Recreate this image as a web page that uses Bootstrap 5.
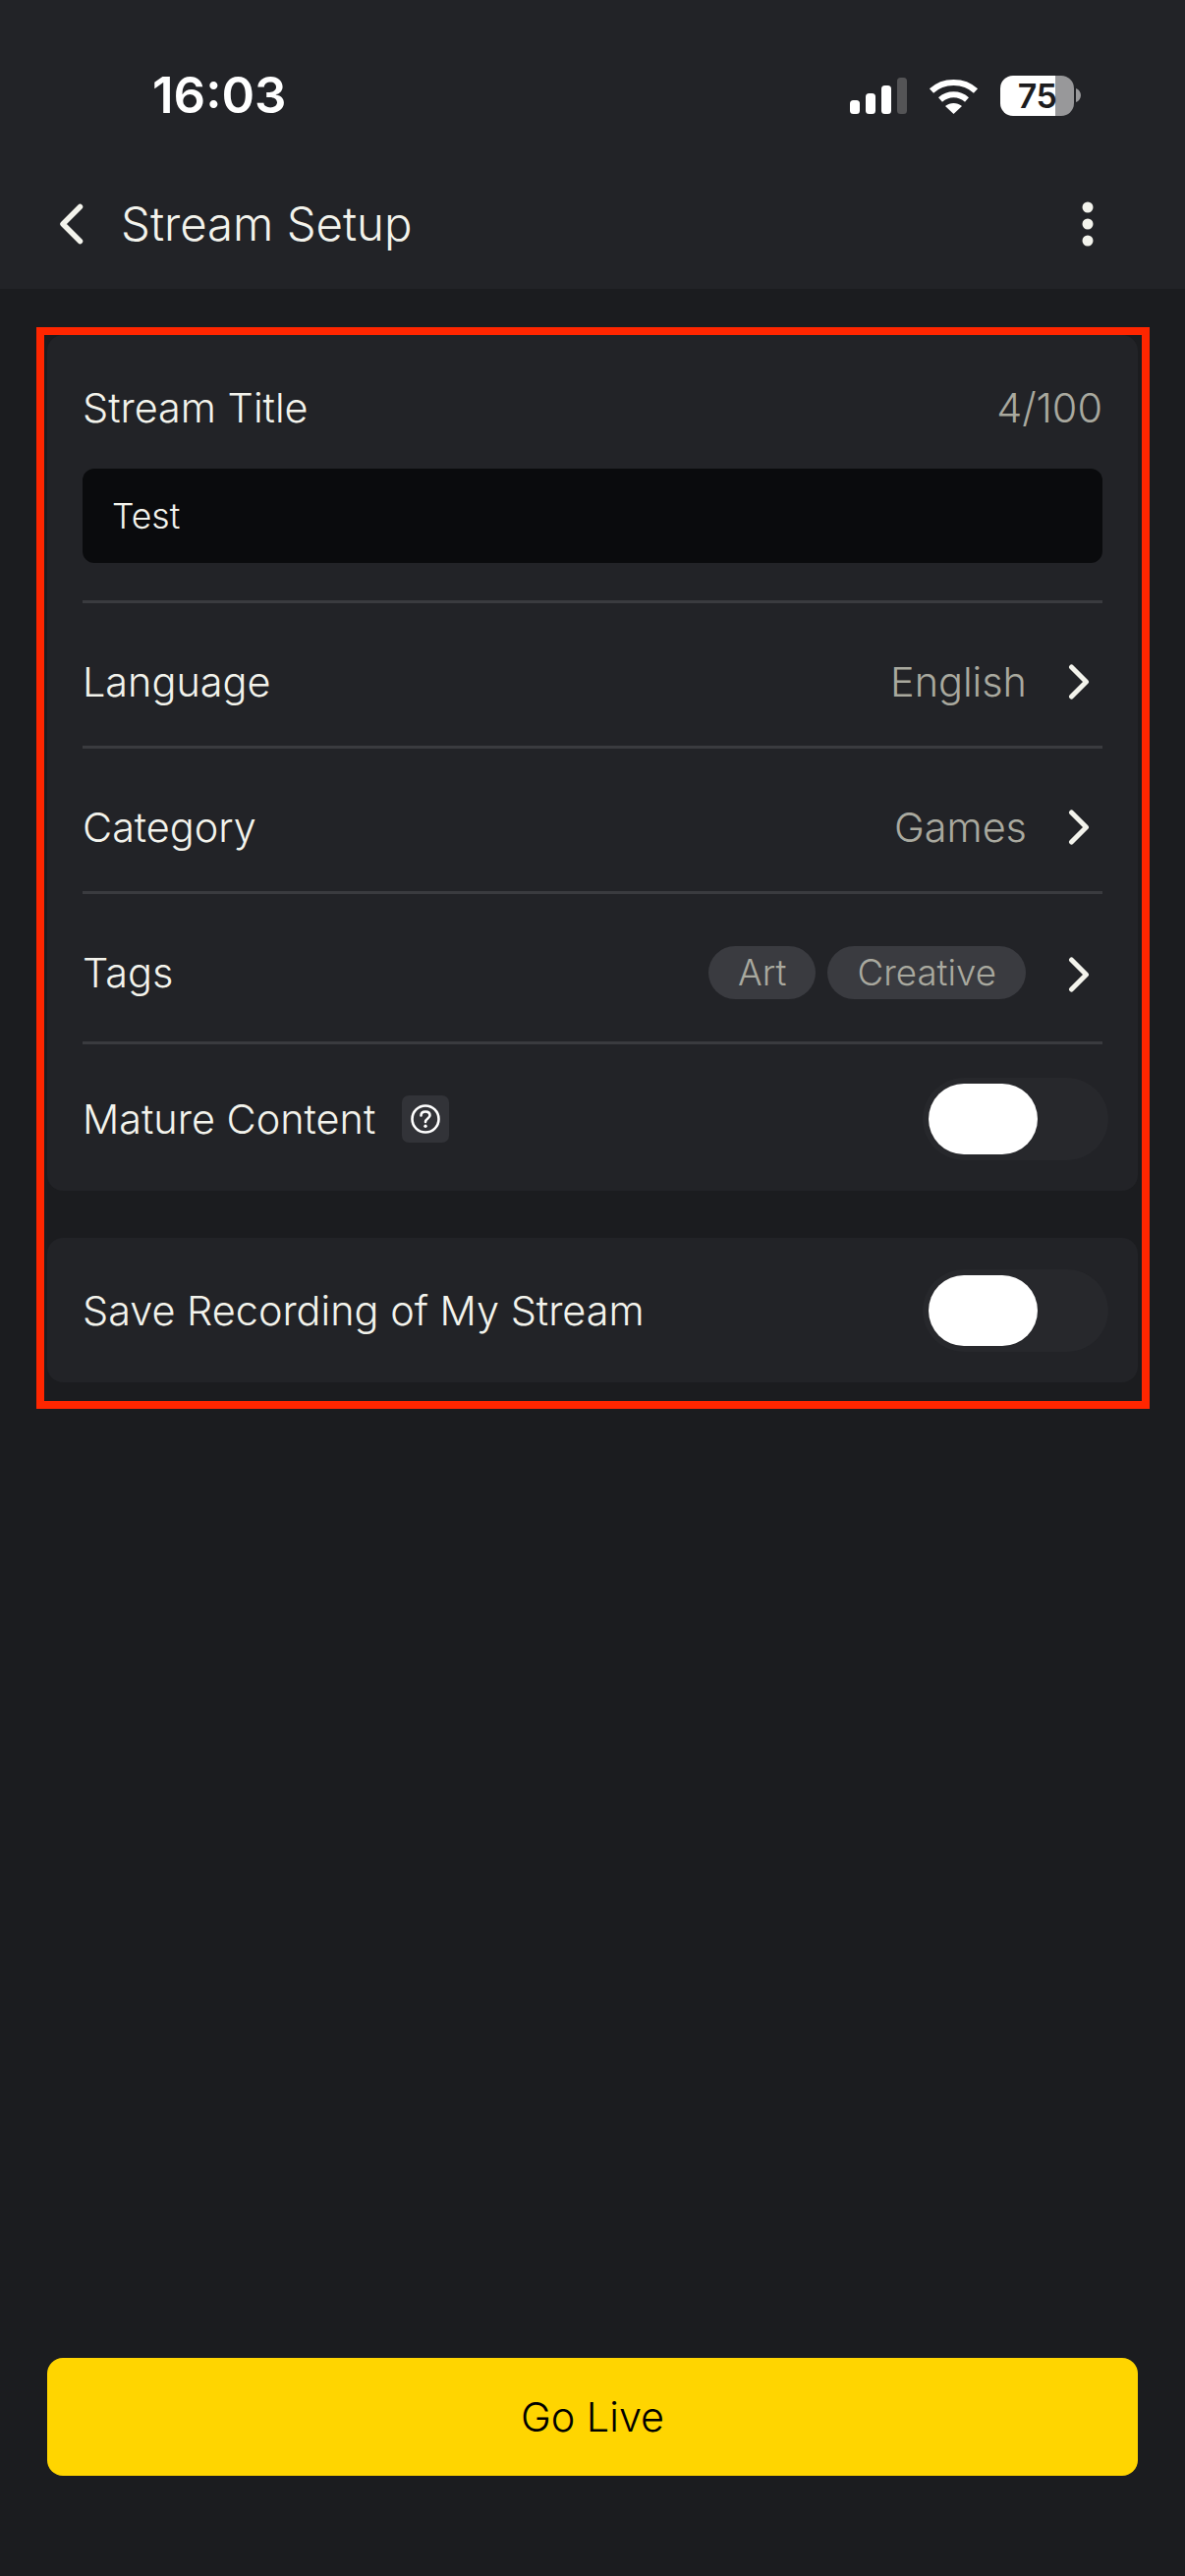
<!DOCTYPE html>
<html lang="en">
<head>
    <meta charset="UTF-8">
    <title>Stream Setup</title>
    <link rel="stylesheet" href="https://cdn.jsdelivr.net/npm/bootstrap@5.3.3/dist/css/bootstrap.min.css">
    <style>
        html, body { height: 100%; }
        body { background: #1b1c1f; color: #f3f3ec; font-family: Inter, "Liberation Sans", sans-serif; font-size: 41.4px; font-weight: 300; line-height: 48px; }
        .page-wrap { min-height: 2622px; }
        .top-head { background: #222327; height: 294px; }
        .status-row { height: 194px; padding: 0 106px 0 155px; }
        .clock { font-size: 51px; font-weight: 600; color: #fff; line-height: 60px; }
        .status-icons { gap: 22px; }
        .batt { width: 75px; height: 41px; border-radius: 13px; background: linear-gradient(90deg, #fff 56px, #98989a 56px); color: #1c1c1e; font-size: 34px; font-weight: 600; line-height: 41px; text-align: center; letter-spacing: -0.5px; }
        .batt-wrap { gap: 2px; }
        .title-row { height: 68px; padding: 0 85px 0 60px; }
        .page-title { font-size: 47.3px; margin-left: 38px; }
        .red-frame { margin: 39px 36px 0 37px; border: 8px solid #ff2600; padding: 0 4px 19px 3px; }
        .setup-box { background: #222327; border-radius: 16px; padding: 0 36px; }
        .setup-box + .setup-box { margin-top: 48px; }
        .field-head { padding-top: 50px; height: 136px; }
        .muted-txt { color: #a9a99f; }
        .form-control.title-input { background: #0a0b0d; border: 0; border-radius: 12px; height: 96px; color: #f3f3ec; font-size: 35.5px; font-weight: 300; padding: 0 30px; }
        .field-end { height: 38px; }
        .set-row { border-top: 3px solid #3a3b3f; padding-top: 15px; height: 148px; }
        .set-row.tags-row { height: 153px; padding-top: 10px; }
        .set-row.last-row { height: 152px; padding-top: 3px; }
        .chev { margin: 0 13px 0 42px; }
        .tag-gap { gap: 12px; }
        .tags-row .chev { margin-left: 31px; margin-top: 3px; }
        .tag-pill { background: #3a3b40; color: #a9a99f; font-size: 36.7px; font-weight: 300; height: 54px; line-height: 54px; padding: 0 30px; }
        .help-box { width: 48px; height: 48px; background: #323338; border-radius: 7px; margin-left: 27px; }
        .toggle-track { width: 189px; height: 84px; background: #27282c; border-radius: 42px; padding: 6px; margin-right: -6px; }
        .toggle-knob { width: 111px; height: 72px; background: #fff; border-radius: 36px; }
        .rec-row { height: 147px; }
        .go-wrap { padding: 0 48px 102px; }
        .btn.go-btn { background: #ffd500; color: #000; border: 0; border-radius: 16px; height: 120px; font-size: 41.4px; font-weight: 300; }
    </style>
</head>
<body>
    <div class="page-wrap d-flex flex-column">
        <div class="top-head">
            <div class="status-row d-flex justify-content-between align-items-center">
                <span class="clock">16:03</span>
                <div class="status-icons d-flex align-items-center">
                    <svg width="58" height="37" viewBox="0 0 58 37">
                        <rect x="0" y="23" width="10" height="14" rx="3.5" fill="#fff"/>
                        <rect x="16" y="16" width="10" height="21" rx="3.5" fill="#fff"/>
                        <rect x="32" y="8" width="10" height="29" rx="3.5" fill="#fff"/>
                        <rect x="48" y="0" width="10" height="37" rx="3.5" fill="#545456"/>
                    </svg>
                    <svg width="51" height="37" viewBox="0 0 51 37">
                        <path d="M3 13.5C15 2 36 2 48 13.5" fill="none" stroke="#fff" stroke-width="6"/>
                        <path d="M12 22.5C20 15.5 31 15.5 39 22.5" fill="none" stroke="#fff" stroke-width="6"/>
                        <path d="M25.500 37L17 29C22 25 29 25 34 29Z" fill="#fff"/>
                    </svg>
                    <div class="batt-wrap d-flex align-items-center">
                        <div class="batt">75</div>
                        <svg width="5" height="14" viewBox="0 0 5 14"><path d="M0 0C3 1 5 4 5 7C5 10 3 13 0 14Z" fill="#98989a"/></svg>
                    </div>
                </div>
            </div>
            <div class="title-row d-flex justify-content-between align-items-center">
                <div class="d-flex align-items-center">
                    <svg width="25" height="42" viewBox="0 0 25 42"><path d="M21.500 3.500L4 21L21.500 38.500" fill="none" stroke="#f3f3ec" stroke-width="5.500" stroke-linecap="round" stroke-linejoin="round"/></svg>
                    <span class="page-title">Stream Setup</span>
                </div>
                <svg width="12" height="46" viewBox="0 0 12 46" class="me-2">
                    <circle cx="6" cy="6" r="5.500" fill="#f3f3ec"/>
                    <circle cx="6" cy="23" r="5.500" fill="#f3f3ec"/>
                    <circle cx="6" cy="40" r="5.500" fill="#f3f3ec"/>
                </svg>
            </div>
        </div>

        <div class="red-frame">
            <div class="setup-box">
                <div class="field-head d-flex justify-content-between">
                    <span>Stream Title</span>
                    <span class="muted-txt">4/100</span>
                </div>
                <input type="text" class="form-control title-input" value="Test">
                <div class="field-end"></div>

                <div class="set-row d-flex justify-content-between align-items-center">
                    <span>Language</span>
                    <div class="d-flex align-items-center">
                        <span class="muted-txt">English</span>
                        <svg class="chev" width="22" height="36" viewBox="0 0 22 36"><path d="M3.500 3L18.500 18L3.500 33" fill="none" stroke="#f3f3ec" stroke-width="5" stroke-linecap="round" stroke-linejoin="round"/></svg>
                    </div>
                </div>
                <div class="set-row d-flex justify-content-between align-items-center">
                    <span>Category</span>
                    <div class="d-flex align-items-center">
                        <span class="muted-txt">Games</span>
                        <svg class="chev" width="22" height="36" viewBox="0 0 22 36"><path d="M3.500 3L18.500 18L3.500 33" fill="none" stroke="#f3f3ec" stroke-width="5" stroke-linecap="round" stroke-linejoin="round"/></svg>
                    </div>
                </div>
                <div class="set-row tags-row d-flex justify-content-between align-items-center">
                    <span>Tags</span>
                    <div class="d-flex align-items-center tag-gap">
                        <span class="badge rounded-pill tag-pill">Art</span>
                        <span class="badge rounded-pill tag-pill">Creative</span>
                        <svg class="chev" width="22" height="36" viewBox="0 0 22 36"><path d="M3.500 3L18.500 18L3.500 33" fill="none" stroke="#f3f3ec" stroke-width="5" stroke-linecap="round" stroke-linejoin="round"/></svg>
                    </div>
                </div>
                <div class="set-row last-row d-flex justify-content-between align-items-center">
                    <div class="d-flex align-items-center">
                        <span>Mature Content</span>
                        <div class="help-box d-flex align-items-center justify-content-center">
                            <svg width="30" height="30" viewBox="0 0 30 30">
                                <circle cx="15" cy="15" r="13.500" fill="none" stroke="#fff" stroke-width="2.600"/>
                                <path d="M10.500 11.500C10.500 8.800 12.500 7.500 15 7.500C17.600 7.500 19.500 9 19.500 11.300C19.500 14.500 15 14.500 15 18" fill="none" stroke="#fff" stroke-width="2.600" stroke-linecap="round"/>
                                <circle cx="15" cy="22.300" r="1.700" fill="#fff"/>
                            </svg>
                        </div>
                    </div>
                    <div class="toggle-track"><div class="toggle-knob"></div></div>
                </div>
            </div>

            <div class="setup-box">
                <div class="rec-row d-flex justify-content-between align-items-center">
                    <span>Save Recording of My Stream</span>
                    <div class="toggle-track"><div class="toggle-knob"></div></div>
                </div>
            </div>
        </div>

        <div class="go-wrap mt-auto">
            <button type="button" class="btn go-btn w-100">Go Live</button>
        </div>
    </div>
    <script src="https://cdn.jsdelivr.net/npm/bootstrap@5.3.3/dist/js/bootstrap.bundle.min.js"></script>
</body>
</html>
